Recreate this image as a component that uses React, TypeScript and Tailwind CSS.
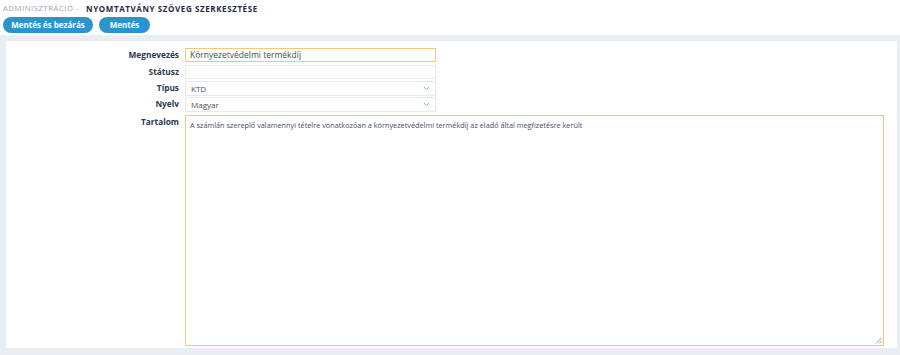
import React from "react";

const font = { fontFamily: '"Open Sans", "Noto Sans", sans-serif' };

function Chevron() {
  return (
    <svg width="7" height="5" viewBox="0 0 7 5" className="shrink-0">
      <path d="M0.8 1 L3.5 3.6 L6.2 1" fill="none" stroke="#6fb3e0" strokeWidth="1" />
    </svg>
  );
}

function ResizeHandle() {
  return (
    <svg width="7" height="7" viewBox="0 0 7 7" className="absolute right-[1px] bottom-[1px]">
      <path d="M6.5 1 L1 6.5 M6.5 4 L4 6.5" stroke="#9a9a9a" strokeWidth="1" fill="none" />
    </svg>
  );
}

function Label({ children }: { children: React.ReactNode }) {
  return (
    <div className="w-[179px] shrink-0 pr-[6px] text-right text-[8.3px] font-bold leading-[14px] text-[#2b3a4d]">
      {children}
    </div>
  );
}

export default function App() {
  return (
    <div style={font} className="w-[900px] h-[355px] flex flex-col bg-[#e9eef2] overflow-hidden">
      <div className="bg-white h-[35px] shrink-0 px-[3px] flex flex-col">
        <div className="h-[17px] flex items-center leading-none pt-[1px]">
          <span className="text-[7.6px] text-[#9aa3ad] tracking-[0.6px]">ADMINISZTRÁCIÓ -</span>
          <span className="ml-[7px] text-[8px] font-bold text-[#1f2d3d] tracking-[0.6px]">NYOMTATVÁNY SZÖVEG SZERKESZTÉSE</span>
        </div>
        <div className="flex gap-[6px]">
          <button className="h-[16px] w-[90px] rounded-full bg-[#2d93cd] text-white text-[8px] font-bold leading-none">
            Mentés és bezárás
          </button>
          <button className="h-[16px] w-[51px] rounded-full bg-[#2d93cd] text-white text-[8px] font-bold leading-none">
            Mentés
          </button>
        </div>
      </div>
      <div className="flex-1 pt-[6px] pl-[6px] pr-[3px] pb-[7px] flex">
        <div className="flex-1 bg-white pt-[7px] flex flex-col">
          <div className="flex h-[14px]">
            <Label>Megnevezés</Label>
            <div className="w-[251px] h-[14px] border border-[#f4c878] px-[4px] text-[8.5px] leading-[12px] text-[#4a4f55]">
              Környezetvédelmi termékdíj
            </div>
          </div>
          <div className="flex h-[14px] mt-[3px]">
            <Label>Státusz</Label>
            <div className="w-[251px] h-[14px] border border-[#e6e9ed]" />
          </div>
          <div className="flex h-[15px] mt-[2px]">
            <Label>Típus</Label>
            <div className="w-[251px] h-[15px] border border-[#e6e9ed] pl-[5px] pr-[5px] flex items-center justify-between text-[8px] text-[#4a4f55]">
              <span>KTD</span>
              <Chevron />
            </div>
          </div>
          <div className="flex h-[15px] mt-[1px]">
            <Label>Nyelv</Label>
            <div className="w-[251px] h-[15px] border border-[#e6e9ed] pl-[5px] pr-[5px] flex items-center justify-between text-[8px] text-[#4a4f55]">
              <span>Magyar</span>
              <Chevron />
            </div>
          </div>
          <div className="flex mt-[3px]">
            <Label>Tartalom</Label>
            <div className="relative w-[699px] h-[231px] border border-[#f4c878] px-[4px] py-[3px] text-[7.3px] leading-[12px] text-[#4a4f55]">
              A számlán szereplő valamennyi tételre vonatkozóan a környezetvédelmi termékdíj az eladó által megfizetésre került
              <ResizeHandle />
            </div>
          </div>
        </div>
      </div>
    </div>
  );
}
